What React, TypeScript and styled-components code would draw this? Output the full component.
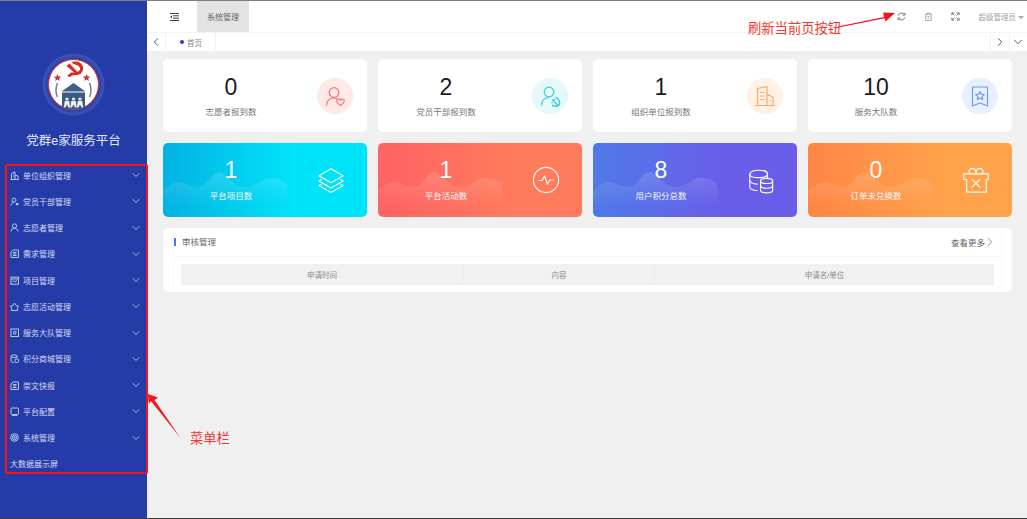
import React from "react";
import styled, { createGlobalStyle } from "styled-components";
import { ChevronDown, ChevronLeft, ChevronRight } from "lucide-react";

const Global = createGlobalStyle`
  html, body { margin: 0; padding: 0; width: 1027px; height: 519px; overflow: hidden; background: #f0f0f0; }
  #root { width: 1027px; height: 519px; }
  * { box-sizing: border-box; }
`;

const Page = styled.div`
  position: relative;
  width: 1027px;
  height: 519px;
  display: grid;
  grid-template-columns: 147px 1fr;
  overflow: hidden;
  font-family: "Liberation Sans", "Noto Sans CJK SC", sans-serif;
  border-top: 1px solid #7d7d7d;
  border-bottom: 1px solid #3a3a3a;
`;

const Sidebar = styled.aside`
  background: #253ba8;
  display: flex;
  flex-direction: column;
  align-items: stretch;
  margin-top: -1px;
  border-top: 1px solid #343a5c;
  padding-top: 52px;
`;

const Brand = styled.div`
  display: flex;
  flex-direction: column;
  align-items: center;
  gap: 17px;
  height: 109px;
`;

const Title = styled.h1`
  margin: 0;
  font-size: 12.5px;
  line-height: 16px;
  font-weight: 400;
  color: #e4e9ff;
  white-space: nowrap;
`;

const Menu = styled.nav`
  display: flex;
  flex-direction: column;
`;

const MenuRow = styled.div`
  height: 26.25px;
  display: flex;
  align-items: center;
  padding: 0 5px 0 10px;
  color: #d7ddf7;
  font-size: 8px;
  gap: 4px;
`;

const MenuIcon = styled.svg`
  width: 9px;
  height: 9px;
  flex: none;
  fill: none;
  stroke: #bcc6ee;
  stroke-width: 1;
`;

const MenuLabel = styled.span`
  flex: 1;
  white-space: nowrap;
`;

const Main = styled.main`
  display: flex;
  flex-direction: column;
  min-width: 0;
`;

const TopBar = styled.header`
  height: 31px;
  background: #fff;
  display: flex;
  align-items: stretch;
  color: #666;
  font-size: 8px;
`;

const Burger = styled.div`
  width: 50px;
  display: flex;
  align-items: center;
  justify-content: center;
  padding-left: 4px;
`;

const ActiveTab = styled.div`
  width: 52px;
  background: #e3e3e3;
  display: flex;
  align-items: center;
  justify-content: center;
  color: #666;
`;

const TopActions = styled.div`
  margin-left: auto;
  display: flex;
  align-items: center;
  color: #999;
`;

const ActionIcon = styled.svg<{ $faint?: boolean }>`
  width: 9px;
  height: 9px;
  fill: none;
  stroke: ${(p) => (p.$faint ? "#aaa" : "#777")};
  stroke-width: 1.1;
  margin-right: 18px;
`;

const UserName = styled.span`
  font-size: 7.5px;
  color: #a5a5a5;
  margin-left: 1px;
  white-space: nowrap;
`;

const Caret = styled.span`
  width: 0;
  height: 0;
  margin: 1px 3px 0 2px;
  border-left: 3px solid transparent;
  border-right: 3px solid transparent;
  border-top: 3px solid #a5a5a5;
`;

const CrumbBar = styled.div`
  height: 19px;
  background: #fff;
  display: flex;
  align-items: stretch;
  border-top: 1px solid #f4f4f4;
`;

const CrumbArrow = styled.div<{ $side: "left" | "right" }>`
  width: ${(p) => (p.$side === "left" ? 19 : 18.5)}px;
  display: flex;
  align-items: center;
  justify-content: center;
  color: #444;
  ${(p) => (p.$side === "left" ? "border-right" : "border-left")}: 1px solid #f2f2f2;
`;

const Crumb = styled.div`
  width: 50px;
  display: flex;
  align-items: center;
  padding-left: 14px;
  gap: 3px;
  font-size: 7.5px;
  color: #888;
  border-right: 1px solid #f2f2f2;
`;

const Dot = styled.span`
  width: 4px;
  height: 4px;
  border-radius: 50%;
  background: #2a40b0;
`;

const Spacer = styled.div`
  flex: 1;
`;

const Content = styled.div`
  flex: 1;
  background: #f0f0f0;
  padding: 8px 15px 0 16px;
  display: flex;
  flex-direction: column;
  gap: 11px;
`;

const CardGrid = styled.div`
  display: grid;
  grid-template-columns: repeat(4, 204px);
  gap: 11px;
`;

const StatCard = styled.div`
  height: 73px;
  background: #fff;
  border-radius: 5px;
  display: grid;
  grid-template-columns: 136px 1fr;
  align-items: center;
  position: relative;
`;

const StatText = styled.div`
  display: flex;
  flex-direction: column;
  align-items: center;
`;

const StatNum = styled.div`
  font-size: 23px;
  line-height: 26px;
  color: #1c1c1c;
`;

const StatLabel = styled.div`
  font-size: 8.5px;
  line-height: 12px;
  margin-top: 6px;
  color: #777;
  white-space: nowrap;
`;

const IconCircle = styled.div<{ $bg: string }>`
  width: 36px;
  height: 36px;
  margin-left: 18px;
  border-radius: 50%;
  background: ${(p) => p.$bg};
  display: flex;
  align-items: center;
  justify-content: center;
`;

const GradCard = styled.div<{ $from: string; $to: string }>`
  height: 74px;
  position: relative;
  overflow: hidden;
  border-radius: 5px;
  background: linear-gradient(90deg, ${(p) => p.$from} 0%, ${(p) => p.$to} 66%, ${(p) => p.$to} 100%);
  display: grid;
  grid-template-columns: 136px 1fr;
  align-items: center;
  color: #fff;
`;

const Wave = styled.svg`
  position: absolute;
  left: 0;
  top: 28px;
  width: 130px;
  height: 46px;
`;

const GradText = styled.div`
  position: relative;
  display: flex;
  flex-direction: column;
  align-items: center;
  margin-top: -2px;
`;

const GradNum = styled.div`
  font-size: 23px;
  line-height: 26px;
  color: #fff;
`;

const GradLabel = styled.div`
  font-size: 8.5px;
  line-height: 12px;
  margin-top: 7px;
  color: #f3f8ff;
  white-space: nowrap;
`;

const GradIcon = styled.svg`
  width: 28px;
  height: 28px;
  margin-left: 18px;
  fill: none;
  stroke: #fff;
  stroke-width: 1.2;
  stroke-linejoin: round;
  stroke-linecap: round;
`;

const Panel = styled.section`
  height: 64px;
  background: #fff;
  border-radius: 5px;
  padding: 0 10px;
`;

const PanelInner = styled.div`
  height: 100%;
  border-left: 1px solid #fafafa;
  border-right: 1px solid #fafafa;
`;

const PanelHead = styled.div`
  height: 28.5px;
  border-bottom: 1px solid #f6f6f6;
  display: flex;
  align-items: center;
  justify-content: space-between;
  padding-right: 4px;
`;

const PanelTitle = styled.div`
  font-size: 8.5px;
  color: #666;
  border-left: 2px solid #3d7df2;
  padding-left: 6px;
  line-height: 8px;
`;

const More = styled.div`
  display: flex;
  align-items: center;
  gap: 0;
  font-size: 8.5px;
  color: #666;
`;

const MoreChevron = styled(ChevronRight)`
  margin-left: -2px;
`;

const TableHead = styled.div`
  margin: 7.5px 7px 0 7px;
  height: 21px;
  background: #f1f1f1;
  display: grid;
  grid-template-columns: 282px 191px 340px;
`;

const Th = styled.div`
  display: flex;
  align-items: center;
  justify-content: center;
  font-size: 7.5px;
  color: #8a8a8a;
  & + & { border-left: 1px solid #ececec; }
`;

const RedFrame = styled.div`
  position: absolute;
  left: 5px;
  top: 163px;
  width: 143px;
  height: 310px;
  border: 2px solid #f5141c;
  border-radius: 2px;
  pointer-events: none;
`;

const Arrows = styled.svg`
  position: absolute;
  left: 0;
  top: -1px;
  width: 1027px;
  height: 519px;
  pointer-events: none;
`;

const Note = styled.div<{ $size: number }>`
  position: absolute;
  font-size: ${(p) => p.$size}px;
  line-height: 16px;
  color: #f5352c;
  white-space: nowrap;
`;

const TopNote = styled(Note)`
  left: 748px;
  top: 20px;
`;

const SideNote = styled(Note)`
  left: 190px;
  top: 430px;
`;

const BottomMark = styled.div<{ $x: number; $w: number }>`
  position: absolute;
  bottom: -1px;
  left: ${(p) => p.$x}px;
  width: ${(p) => p.$w}px;
  height: 1px;
  background: #8c8c8c;
`;

const menuIcons: Record<string, React.ReactNode> = {
  org: (<><path d="M1.5 8.5V2.5L5 1v7.5M5 4l3 1v3.5M.5 8.5h8" /><path d="M3 4h.8M3 6h.8" /></>),
  cadre: (<><circle cx="4" cy="3" r="2" /><path d="M.8 8.5c.3-2 1.5-3 3.2-3" /><rect x="5.8" y="6" width="2.6" height="2.2" fill="#bcc6ee" stroke="none" /></>),
  user: (<><circle cx="4.5" cy="3" r="2.1" /><path d="M1 8.5c.4-2.2 1.7-3.2 3.5-3.2s3.1 1 3.5 3.2" /></>),
  files: (<><path d="M3 1h5.5v7.5H1V3z" /><path d="M3 3.5h3.5M3 5h3.5M3 6.5h3.5" /></>),
  project: (<><rect x="1" y="1.2" width="7.5" height="7" /><path d="M1 3h7.5M2.5 6l1.5-1.3 1.2 1L7 4.5" /></>),
  star: (<path d="M4.5 1 6 3.5l2.5.6-1.2 2 .3 2.4H1.4l.3-2.4-1.2-2L3 3.5z" />),
  team: (<><rect x="1" y="1" width="7.5" height="7.5" /><path d="M4.7 2.8 5.3 4l1.2.2-.9.8.2 1.2-1.1-.6-1 .6.2-1.2-.9-.8L4.1 4z" /></>),
  db: (<><ellipse cx="4" cy="2.2" rx="3" ry="1.3" /><path d="M1 2.2v5c0 .7 1.3 1.3 3 1.3M7 2.2v2" /><rect x="5" y="5" width="3.5" height="3.5" rx="1" /></>),
  tablet: (<><rect x="1" y="1" width="7.5" height="6.5" rx="1" /><path d="M2 8.6h5.5" /></>),
  gear: (<><circle cx="4.5" cy="4.5" r="3.8" /><circle cx="4.5" cy="4.5" r="2.2" /><circle cx="4.5" cy="4.5" r=".8" /></>),
};

const menu = [
  ["单位组织管理", "org"],
  ["党员干部管理", "cadre"],
  ["志愿者管理", "user"],
  ["需求管理", "files"],
  ["项目管理", "project"],
  ["志愿活动管理", "star"],
  ["服务大队管理", "team"],
  ["积分商城管理", "db"],
  ["崇文快报", "files"],
  ["平台配置", "tablet"],
  ["系统管理", "gear"],
];

const Logo = () => (
  <svg width="63" height="63" viewBox="0 0 63 63">
    <circle cx="31.5" cy="31.5" r="31" fill="#3a50b2" />
    <circle cx="31.5" cy="31.5" r="28" fill="#2f45ab" />
    <circle cx="31.5" cy="31.5" r="25" fill="#fff" stroke="#d92c2c" strokeWidth="1" />
    <path d="M30 9c5-1.500 10 .5 11 5 .8 4-2 8-6 8-2 0-5 0-7 2l-3-1 4-3.500c3 0 8 0 9-3 .6-3-3-5-7-5.500z" fill="#dd2a25" />
    <path d="m24.500 13 3-2.500 8.500 9-2 1.500z" fill="#dd2a25" />
    <path d="m15.500 21 1.100 2.400 2.600.3-2 1.700.6 2.600-2.300-1.400-2.300 1.400.6-2.600-2-1.700 2.600-.3zM44.500 21l1.100 2.400 2.600.3-2 1.700.6 2.600-2.300-1.400-2.300 1.400.6-2.600-2-1.700 2.600-.3z" fill="#b83a45" />
    <path d="M15.500 30c-2 5-2 10 0 14M47.500 30c2 5 2 10 0 14" fill="none" stroke="#6d8096" strokeWidth="1.500" />
    <path d="m31.500 30-12 8.500h24z" fill="#3d6189" />
    <path d="M20 39.500h23v14.500c-3.500 1.800-7.500 2.500-11.500 2.500S23.500 55.800 20 54z" fill="#3d5a80" />
    <g fill="#eef1f5">
      <circle cx="25" cy="46" r="1.600" /><path d="M22.800 48h4.400l1 6.500h-1.500L25 51.500l-1.700 3h-1.500z" />
      <circle cx="31.500" cy="46" r="1.600" /><path d="M29.300 48h4.400l1 6.500h-1.500l-1.700-3-1.700 3h-1.500z" />
      <circle cx="38" cy="46" r="1.600" /><path d="M35.800 48h4.400l1 6.500h-1.500L38 51.500l-1.700 3h-1.500z" />
    </g>
  </svg>
);

const LineIcon = styled.svg<{ $c: string }>`
  width: 22px;
  height: 22px;
  fill: none;
  stroke: ${(p) => p.$c};
  stroke-width: 1.2;
  stroke-linecap: round;
  stroke-linejoin: round;
`;

const stats = [
  { n: "0", l: "志愿者报到数", bg: "#ffe9e9", c: "#fb6f75", icon: (<><circle cx="10" cy="7.500" r="4.800" /><path d="M2.500 20c.5-4.500 3-7 7.500-7 1.200 0 2 .1 3 .5" /><path d="M16.500 20.500c-2.500-1.800-3.800-3-3.800-4.500 0-2 2.600-2.500 3.800-.7 1.200-1.800 3.800-1.300 3.800.7 0 1.500-1.300 2.700-3.800 4.500z" /></>) },
  { n: "2", l: "党员干部报到数", bg: "#e5f8fa", c: "#37cfdc", icon: (<><circle cx="10" cy="7" r="4.800" /><path d="M2.500 20c.5-4.500 3-7.500 7.500-7.500" /><path d="M17 12.500c3 1.200 4.500 4.500 3 7.500-1.500 1.500-4 1.500-6.500.5" strokeWidth="1.500" /><path d="m13.500 15 5 5M13 17.500l3-3" strokeWidth="1.500" /></>) },
  { n: "1", l: "组织单位报到数", bg: "#fff1e6", c: "#ffa766", icon: (<><path d="M1.500 20.500h19M3.500 20.500V3.500L13 1.500v19M13 9l6 3.500v8" /><path d="M6.500 7.500h3.500M6.500 11h3.500M6.500 14.500h3.500M16 15.500h.6" /></>) },
  { n: "10", l: "服务大队数", bg: "#e8f0ff", c: "#6a98f5", icon: (<><path d="M3.500 2h15v19l-7.500-3-7.500 3z" /><path d="m11 6.500 1.300 2.700 3 .4-2.200 2 .6 3-2.700-1.500-2.700 1.500.6-3-2.200-2 3-.4z" /></>) },
];

const grads = [
  { n: "1", l: "平台项目数", from: "#04b2e3", to: "#00e4f9", icon: (<><path d="m15 3 13 7.500-13 7.500L2 10.500z" /><path d="m4.500 14.500-2.500 1.500 13 7.500L28 16l-2.500-1.500" /><path d="m4.500 19.500-2.500 1.500 13 7.500L28 21l-2.500-1.500" /></>) },
  { n: "1", l: "平台活动数", from: "#ff6263", to: "#ff7b5c", icon: (<><circle cx="15" cy="15" r="13.500" /><path d="M7 15.500h4l2.500-5 3 9 2.500-4.500h4" /></>) },
  { n: "8", l: "用户积分总数", from: "#4f7ae8", to: "#6a5de9", icon: (<><path d="M22 8.500c0-2.500-4.500-4-9.500-4S3 6 3 8.500v14c0 2 3.500 3.500 8 3.800" /><path d="M3 8.500c0 2.500 4.500 4 9.500 4s9.500-1.500 9.500-4M3 15.500c0 2.200 3.500 3.500 8 3.900M22 8.500v4" /><ellipse cx="21" cy="16" rx="6.500" ry="2.800" /><path d="M14.500 16v10c0 1.600 3 2.800 6.500 2.800s6.500-1.200 6.500-2.800V16M14.500 21c0 1.600 3 2.800 6.500 2.800s6.500-1.200 6.500-2.800" /></>) },
  { n: "0", l: "订单未兑换数", from: "#ff8545", to: "#ffa24a", icon: (<><path d="M2 8.500h26v6h-2v13.500H5V14.500H2z" /><path d="M9 8.500c-3-2-1-6 2-6s4 3 4 6c0-3 1-6 4-6s5 4 2 6" /><path d="m10.500 14 9 9M19.500 14l-9 9" /></>) },
];

export default function App() {
  return (
    <Page>
      <Global />
      <Sidebar>
        <Brand>
          <Logo />
          <Title>党群e家服务平台</Title>
        </Brand>
        <Menu>
          {menu.map(([label, icon]) => (
            <MenuRow key={label}>
              <MenuIcon viewBox="0 0 9 9">{menuIcons[icon]}</MenuIcon>
              <MenuLabel>{label}</MenuLabel>
              <ChevronDown size={12} color="#d7ddf7" strokeWidth={1.5} />
            </MenuRow>
          ))}
          <MenuRow>
            <MenuLabel>大数据展示屏</MenuLabel>
          </MenuRow>
        </Menu>
      </Sidebar>
      <Main>
        <TopBar>
          <Burger>
            <svg width="9" height="8" viewBox="0 0 9 8" fill="none" stroke="#444" strokeWidth="1">
              <path d="M0 .5h9M3 2.800h6M3 5.200h6M0 7.500h9" />
              <path d="M2 2.500 0 4l2 1.500z" fill="#444" stroke="none" />
            </svg>
          </Burger>
          <ActiveTab>系统管理</ActiveTab>
          <TopActions>
            <ActionIcon viewBox="0 0 10 10">
              <path d="M1.200 4A4 4 0 0 1 8.400 3M8.800 6A4 4 0 0 1 1.600 7" />
              <path d="M8.800 .8v2.600H6.200M1.200 9.200V6.600h2.600" />
            </ActionIcon>
            <ActionIcon $faint viewBox="0 0 10 10">
              <path d="M1 2.500h8M3.500 2.500V1h3v1.500M2 2.500V9.500h6V2.500M4 5h2M4 7h2" />
            </ActionIcon>
            <ActionIcon viewBox="0 0 10 10">
              <path d="M1 1l2.800 2.800M9 1 6.200 3.800M1 9l2.800-2.800M9 9 6.200 6.200" />
              <path d="M1 3.500V1h2.500M6.500 1H9v2.500M1 6.500V9h2.500M6.500 9H9V6.500" />
            </ActionIcon>
            <UserName>超级管理员</UserName>
            <Caret />
          </TopActions>
        </TopBar>
        <CrumbBar>
          <CrumbArrow $side="left">
            <ChevronLeft size={14} strokeWidth={1.5} />
          </CrumbArrow>
          <Crumb>
            <Dot />
            首页
          </Crumb>
          <Spacer />
          <CrumbArrow $side="right">
            <ChevronRight size={14} strokeWidth={1.5} />
          </CrumbArrow>
          <CrumbArrow $side="right">
            <ChevronDown size={14} strokeWidth={1.5} />
          </CrumbArrow>
        </CrumbBar>
        <Content>
          <CardGrid>
            {stats.map((s) => (
              <StatCard key={s.l}>
                <StatText>
                  <StatNum>{s.n}</StatNum>
                  <StatLabel>{s.l}</StatLabel>
                </StatText>
                <IconCircle $bg={s.bg}>
                  <LineIcon $c={s.c} viewBox="0 0 22 22">{s.icon}</LineIcon>
                </IconCircle>
              </StatCard>
            ))}
          </CardGrid>
          <CardGrid>
            {grads.map((g) => (
              <GradCard key={g.l} $from={g.from} $to={g.to}>
                <Wave viewBox="0 0 130 46" preserveAspectRatio="none">
                  <defs>
                    <linearGradient id={`w${g.l}`} x1="0" y1="0" x2="0" y2="1">
                      <stop offset="0" stopColor="#fff" stopOpacity="0.15" />
                      <stop offset="0.75" stopColor="#fff" stopOpacity="0" />
                    </linearGradient>
                  </defs>
                  <path
                    d="M0 19C5 16 10 11 15 11 c7 0 11 5 20 5 C45 16 49 1 56 1 c8 0 14 15 26 15 C94 16 98 7 107 7 c8 0 13 2 17 6 l2 33H0z"
                    fill={`url(#w${g.l})`}
                  />
                </Wave>
                <GradText>
                  <GradNum>{g.n}</GradNum>
                  <GradLabel>{g.l}</GradLabel>
                </GradText>
                <GradIcon viewBox="0 0 30 30">{g.icon}</GradIcon>
              </GradCard>
            ))}
          </CardGrid>
          <Panel>
            <PanelInner>
              <PanelHead>
                <PanelTitle>审核管理</PanelTitle>
                <More>
                  查看更多
                  <MoreChevron size={14} strokeWidth={1.2} />
                </More>
              </PanelHead>
              <TableHead>
                <Th>申请时间</Th>
                <Th>内容</Th>
                <Th>申请名/单位</Th>
              </TableHead>
            </PanelInner>
          </Panel>
        </Content>
      </Main>

      <RedFrame />
      <Arrows viewBox="0 0 1027 519">
        <path d="M838 26.500 884 17l-.8-4.500 11.800.5-9.500 8.500-.8-3.200L838.500 27.500z" fill="#f5141c" />
        <path d="M148 394 158 397.500l-3.500 2.500L180.500 438 151 401l-2.200 3z" fill="#f5141c" />
      </Arrows>
      <TopNote $size={13.3}>刷新当前页按钮</TopNote>
      <SideNote $size={13.3}>菜单栏</SideNote>
      <BottomMark $x={59} $w={20} />
      <BottomMark $x={81} $w={18} />
    </Page>
  );
}
